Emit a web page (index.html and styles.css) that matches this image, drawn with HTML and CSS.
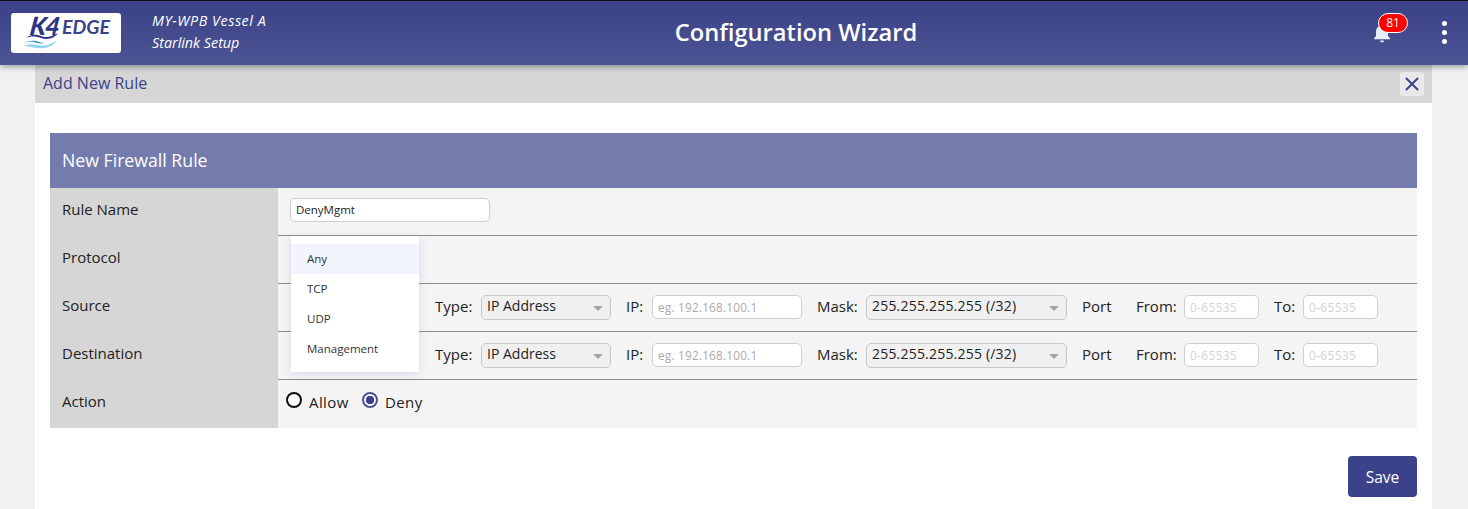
FILE: index.html
```html
<!DOCTYPE html>
<html lang="en">
<head>
<meta charset="utf-8">
<title>Configuration Wizard</title>
<link rel="stylesheet" href="styles.css">
</head>
<body>
<header class="topbar">
  <div class="brand">
    <div class="logo">
      <svg width="110" height="40" viewBox="0 0 110 40">
        <text class="logo-k4" transform="translate(18 22) skewX(-8)">K4</text>
        <text class="logo-edge" x="51" y="21">EDGE</text>
        <path d="M15 25c5-4 10-4 15-2s10 1 17-3c-4 6-11 7-17 5s-10-2-15 0z" fill="#2e3585"/>
        <path d="M10 31c5-3 10-4 15-3 3 1 6 2 9 2-5 1-8 0-11-1-5-1-9 0-13 2z" fill="#1f93c8"/>
        <path d="M12 33c5-2 9-2 14-1s13 1 20-5c-4 7-12 9-20 8s-9-2-14-2z" fill="#93d4ee"/>
      </svg>
    </div>
    <div class="vessel">
      <span class="vessel-name">MY-WPB Vessel A</span>
      <span>Starlink Setup</span>
    </div>
  </div>
  <h1 class="app-title">Configuration Wizard</h1>
  <div class="actions">
    <div class="bell">
      <svg width="22" height="24" viewBox="0 0 22 24"><path fill="#e4eff5" d="M11 3a2 2 0 0 0-2 1.700C6.500 5.500 5 7.700 5 10.500v4.500l-2 2.200v1h16v-1L17 15v-4.500c0-2.800-1.500-5-4-5.800A2 2 0 0 0 11 3zM9 19.500a2 2 0 0 0 4 0z"/></svg>
      <span class="badge">81</span>
    </div>
    <div class="kebab"><i></i><i></i><i></i></div>
  </div>
</header>

<main class="panel">
  <div class="panel-head">
    <span>Add New Rule</span>
    <button class="close" type="button" aria-label="Close">
      <svg width="14" height="14" viewBox="0 0 14 14"><path d="M1 1l12 12M13 1L1 13" stroke="#3b4289" stroke-width="2" fill="none"/></svg>
    </button>
  </div>
  <section class="card">
    <h2 class="card-title">New Firewall Rule</h2>

    <div class="row">
      <div class="row-label">Rule Name</div>
      <div class="row-body"><div class="input name-input filled">DenyMgmt</div></div>
    </div>

    <div class="row">
      <div class="row-label">Protocol</div>
      <div class="row-body">
        <div class="select proto-wrap">
          <ul class="menu">
            <li class="active">Any</li>
            <li>TCP</li>
            <li>UDP</li>
            <li>Management</li>
          </ul>
        </div>
      </div>
    </div>

    <div class="row">
      <div class="row-label">Source</div>
      <div class="row-body">
        <div class="select proto"></div>
        <span class="lbl l-type">Type:</span>
        <div class="select type">IP Address</div>
        <span class="lbl l-ip">IP:</span>
        <div class="input ip">eg. 192.168.100.1</div>
        <span class="lbl l-mask">Mask:</span>
        <div class="select mask">255.255.255.255 (/32)</div>
        <span class="lbl l-port">Port</span>
        <span class="lbl l-from">From:</span>
        <div class="input port">0-65535</div>
        <span class="lbl l-to">To:</span>
        <div class="input port">0-65535</div>
      </div>
    </div>

    <div class="row">
      <div class="row-label">Destination</div>
      <div class="row-body">
        <div class="select proto"></div>
        <span class="lbl l-type">Type:</span>
        <div class="select type">IP Address</div>
        <span class="lbl l-ip">IP:</span>
        <div class="input ip">eg. 192.168.100.1</div>
        <span class="lbl l-mask">Mask:</span>
        <div class="select mask">255.255.255.255 (/32)</div>
        <span class="lbl l-port">Port</span>
        <span class="lbl l-from">From:</span>
        <div class="input port">0-65535</div>
        <span class="lbl l-to">To:</span>
        <div class="input port">0-65535</div>
      </div>
    </div>

    <div class="row last">
      <div class="row-label">Action</div>
      <div class="row-body radios">
        <span class="radio"></span><span class="radio-text allow">Allow</span>
        <span class="radio on"></span><span class="radio-text">Deny</span>
      </div>
    </div>
  </section>
  <div class="foot"><button class="save" type="button">Save</button></div>
</main>
</body>
</html>
```
FILE: styles.css
```css
* { box-sizing: border-box; }
html, body { margin: 0; height: 509px; overflow: hidden; }
body {
  background: #f1f1f1;
  font-family: "Open Sans", "Noto Sans", sans-serif;
  color: #222;
}
.topbar {
  position: relative;
  z-index: 2;
  height: 65px;
  display: grid;
  grid-template-columns: 500px 1fr 376px;
  align-items: center;
  border-top: 1px solid #111;
  background: linear-gradient(#3a4187, #4d5594);
  box-shadow: 0 2px 6px rgba(0, 0, 0, .35);
  color: #fff;
}
.brand { display: flex; align-items: center; padding-left: 11px; }
.logo { width: 110px; height: 40px; background: #fff; border-radius: 3px; margin-top: -1px; }
.logo svg { display: block; overflow: visible; }
.logo-k4 { font: italic 900 25px "Lato", sans-serif; fill: #2e3585; letter-spacing: -1px; }
.logo-edge { font: italic 700 19.500px "Lato", sans-serif; fill: #3b4289; }
.vessel {
  display: flex;
  flex-direction: column;
  gap: 6px;
  margin-left: 31px;
  font-size: 14.300px;
  line-height: 16px;
  font-style: italic;
  margin-top: -2px;
}
.vessel-name { letter-spacing: .55px; }
.app-title { margin: 0 0 2px; text-align: center; font-size: 23.700px; font-weight: 600; line-height: 30px; }
.actions { display: flex; justify-content: flex-end; align-items: center; height: 100%; position: relative; }
.bell { position: absolute; left: 279px; top: 20px; width: 22px; height: 24px; }
.bell svg { display: block; }
.badge {
  position: absolute;
  left: 7px;
  top: -8px;
  width: 30px;
  height: 20px;
  border: 1px solid #fff;
  border-radius: 10px;
  background: #f00;
  color: #fff;
  font-size: 12px;
  line-height: 18px;
  text-align: center;
}
.kebab { display: flex; flex-direction: column; gap: 4px; margin: -2px 21px 0 0; }
.kebab i { width: 5px; height: 5px; border-radius: 50%; background: #fff; }

.panel { width: 1397px; height: 444px; margin-left: 35px; background: #fff; }
.panel-head {
  height: 38px;
  background: #d6d6d6;
  color: #3b4289;
  font-size: 16px;
  display: flex;
  align-items: center;
  justify-content: space-between;
  padding: 0 8px;
}
.panel-head span { margin-top: -3px; }
.close {
  width: 24px;
  height: 24px;
  padding: 0;
  border: 0;
  border-radius: 3px;
  background: #e9e9e9;
  display: flex;
  align-items: center;
  justify-content: center;
}
.card { margin: 30px 15px 0; }
.card-title {
  margin: 0;
  height: 55px;
  padding: 0 0 1px 12px;
  display: flex;
  align-items: center;
  background: #747cad;
  color: #fff;
  font-size: 17.700px;
  font-weight: 400;
}
.row { display: flex; height: 48px; border-bottom: 1px solid #8e8e8e; background: #f4f4f4; }
.row.last { border-bottom: 0; }
.row-label {
  width: 228px;
  flex: none;
  margin-bottom: -1px;
  padding-left: 12px;
  display: flex;
  align-items: center;
  background: #d6d6d6;
  font-size: 15px;
  color: #222;
  padding-bottom: 6px;
}
.row.last .row-label { margin-bottom: 0; }
.row-body { flex: 1; display: flex; align-items: center; padding-left: 13px; padding-bottom: 1px; font-size: 15px; }
.input {
  height: 24px;
  border: 1px solid #cfcfcf;
  border-radius: 5px;
  background: #fff;
  padding-left: 5px;
  font-size: 11.800px;
  line-height: 22px;
  color: #aaa;
  white-space: nowrap;
  overflow: hidden;
}
.filled { color: #222; font-size: 11.500px; }
.name-input { width: 200px; margin-left: -1px; margin-bottom: 3px; }
.ip { width: 150px; letter-spacing: .2px; }
.port { width: 75px; color: #d2d2d2; letter-spacing: .4px; }
.select {
  position: relative;
  height: 25px;
  border: 1px solid #c6c6c6;
  border-radius: 5px;
  background: #f0f0f0;
  padding-left: 5px;
  font-size: 14px;
  line-height: 20px;
  white-space: nowrap;
}
.select.type::after, .select.mask::after {
  content: "";
  position: absolute;
  right: 7px;
  top: 10px;
  border: 5px solid transparent;
  border-top: 5px solid #a5a5a5;
  border-bottom: 0;
}
.proto, .proto-wrap { width: 128px; flex: none; }
.proto-wrap { margin-bottom: -1px; }
.menu {
  position: absolute;
  z-index: 3;
  left: -1px;
  top: -12px;
  width: 128px;
  margin: 0;
  padding: 8px 0;
  list-style: none;
  background: #fff;
  box-shadow: 0 2px 8px rgba(90, 100, 200, .18);
}
.menu li { height: 30px; padding-left: 16px; font-size: 11.500px; line-height: 30px; color: #333; }
.menu li.active { background: #f2f5fd; }
.lbl { flex: none; margin-top: -3px; }
.l-type { width: 46px; margin-left: 16px; }
.type { width: 130px; flex: none; }
.l-ip { width: 26px; margin-left: 15px; }
.ip { flex: none; }
.l-mask { width: 49px; margin-left: 15px; }
.mask { width: 201px; flex: none; letter-spacing: .2px; }
.l-port { width: 54px; margin-left: 15px; }
.l-from { width: 48px; }
.port { flex: none; }
.l-to { width: 29px; margin-left: 15px; }

.radios { padding-left: 8px; padding-bottom: 6px; }
.radio { width: 16px; height: 16px; flex: none; border: 2px solid #111; border-radius: 50%; margin-top: -3px; background: #fff; }
.radio.on { border-color: #4a5296; background: radial-gradient(circle, #3b4289 0 4px, #fff 4.500px); }
.radio-text { margin: 1px 0 0 7px; letter-spacing: .4px; }
.allow { width: 53px; }
.foot { display: flex; justify-content: flex-end; margin: 28px 15px 0; }
.save {
  width: 69px;
  height: 41px;
  border: 0;
  border-radius: 4px;
  background: #3b4289;
  color: #fff;
  font: 15.500px "Open Sans", sans-serif;
}
```
